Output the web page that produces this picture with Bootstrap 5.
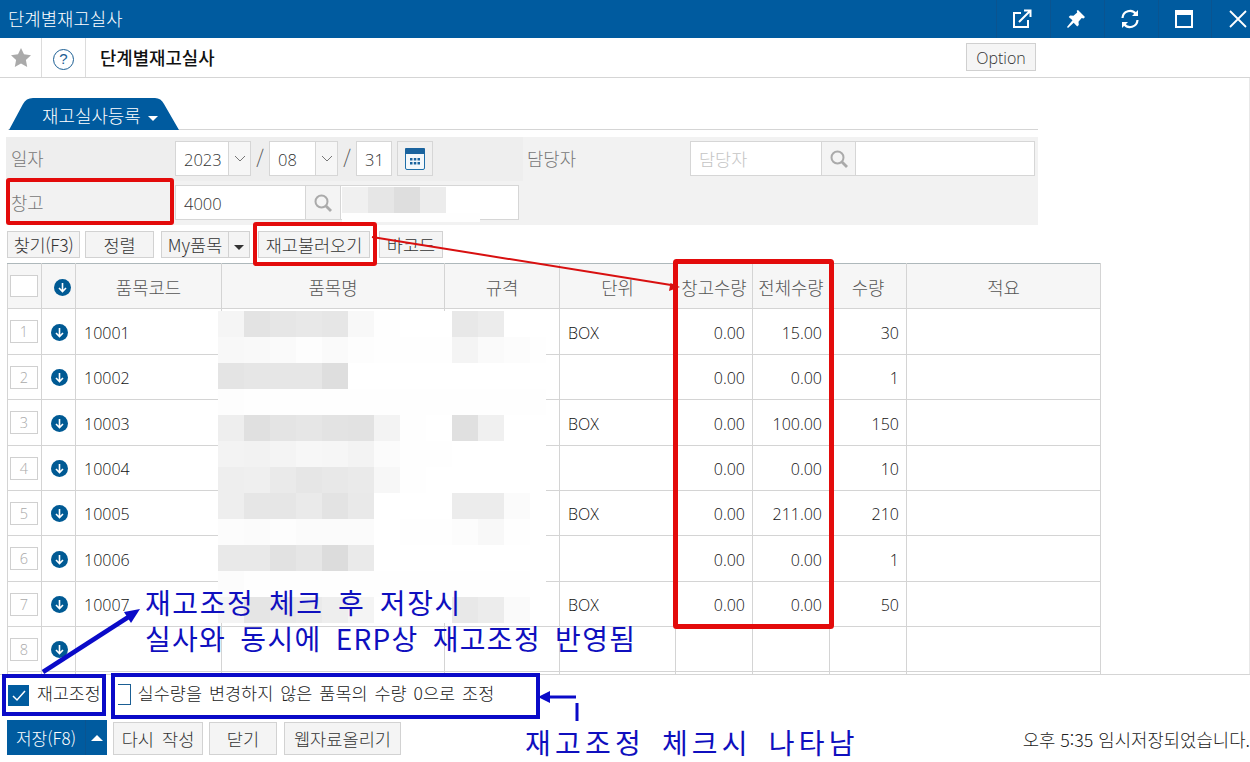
<!DOCTYPE html>
<html lang="ko">
<head>
<meta charset="UTF-8">
<title>단계별재고실사</title>
<link href="https://cdn.jsdelivr.net/npm/bootstrap@5.3.0/dist/css/bootstrap.min.css" rel="stylesheet">
<style>
    html, body { height: 762px; overflow: hidden; }
    body { font-family: "Open Sans", "Noto Sans CJK KR", sans-serif; font-weight: 400; color: #333; font-size: 17.5px; background: #fff; }
    .page-wrap { position: relative; width: 1250px; height: 762px; overflow: hidden; }
    .ko { font-family: "Noto Sans CJK KR", sans-serif; font-weight: 300; }

    .title-bar { height: 38px; background: #005b9f; color: #fff; padding-left: 8px; }
    .title-bar .title-text { font-size: 17.8px; line-height: 36px; }
    .win-btn { width: 54px; height: 38px; border-left: 1px solid #0a5490; padding-right: 3px; }
    .win-btn:nth-child(4) { width: 53px; }
    .win-btn:last-child { width: 39px; padding: 0 0 0 17px; }

    .sub-bar { height: 40px; border-bottom: 1px solid #d5d5d5; }
    .sub-cell { height: 39px; border-right: 1px solid #dcdcdc; }
    .help-mark { width: 21px; height: 21px; margin-top: 3px; border: 1.5px solid #1b5e93; border-radius: 50%; color: #1b5e93; font-size: 15px; line-height: 18px; text-align: center; font-family: "Liberation Sans", sans-serif; }
    .sub-title { font-size: 17.8px; font-weight: 500; color: #111; margin-left: 14px; line-height: 39px; }
    .option-btn { margin-left: auto; margin-right: 214px; width: 70px; height: 28px; margin-top: 5px; background: #f5f5f5; border: 1px solid #d0d0d0; font-size: 16px; color: #333; line-height: 28px; text-align: center; padding: 0; border-radius: 0; font-family: "Open Sans", sans-serif; font-weight: 300; }

    .work-area { height: 596px; padding-top: 20px; overflow: hidden; border-right: 1px solid #e8e8e8; }
    .tab-line { width: 1030px; margin-left: 8px; height: 32px; border-bottom: 1px solid #d5d5d5; }
    .tab-shape { width: 170px; height: 32px; margin-left: 1px; background: #005b9f; color: #fff; font-size: 17.9px; line-height: 34px; padding-left: 33px; clip-path: path('M0 32 L14 6 Q17 0 24 0 L146 0 Q152 0 155 6 L170 32 Z'); }
    .caret-down { display: inline-block; width: 0; height: 0; border-left: 5px solid transparent; border-right: 5px solid transparent; border-top: 5px solid currentColor; vertical-align: middle; margin-left: 7px; }
    .caret-up { display: inline-block; width: 0; height: 0; border-left: 6px solid transparent; border-right: 6px solid transparent; border-bottom: 6px solid #fff; }

    .search-form { width: 1032px; height: 88px; margin: 7px 0 0 6px; background: #f2f2f2; }
    .form-line { height: 44px; padding-top: 4px; }
    .first-part { width: 517px; height: 44px; margin-top: -4px; padding-top: 4px; background: #eeeeee; }
    .field-label { color: #777; font-size: 17.8px; line-height: 35px; padding-left: 5px; }
    .val-box { height: 35px; border: 1px solid #d6d6d6; background: #fff; font-size: 16.500px; color: #333; line-height: 36px; padding-left: 8px; border-radius: 0; font-family: "Open Sans", sans-serif; }
    .form-control.val-box { box-shadow: none; padding-top: 0; padding-bottom: 0; padding-right: 0; font-family: "Noto Sans CJK KR", sans-serif; font-weight: 300; font-size: 17.500px; }
    .form-control.val-box::placeholder { color: #c4c4c4; }
    .chev-box { width: 22px; height: 33px; border-left: 1px solid #d6d6d6; background: #f6f6f6; }
    .slash-mark { width: 18px; text-align: center; color: #555; font-size: 19px; line-height: 32px; }
    .icon-box { width: 33px; height: 35px; border-top: 1px solid #d6d6d6; border-bottom: 1px solid #d6d6d6; background: #f4f4f4; }
    .cal-btn { width: 36px; height: 35px; margin-left: 5px; border: 1px solid #d6d6d6; background: #f0f0f0; }

    .tool-row { height: 27px; margin: 6px 0 5px 7px; }
    .flat-btn { height: 27px; padding: 0; background: #f4f4f4; border: 1px solid #d2d2d2; border-radius: 0; font-size: 17.500px; font-weight: 300; line-height: 25px; color: #333; text-align: center; white-space: nowrap; }
    .flat-btn:hover { background: #f4f4f4; border-color: #d2d2d2; }
    .tight-txt { letter-spacing: -0.4px; }

    .grid-wrap { margin-left: 7px; width: 1093px; }
    .grid-table { table-layout: fixed; width: 1093px; margin: 0; border-collapse: collapse; }
    .grid-table th, .grid-table td { border: 1px solid #d4d4d4; padding: 2px 7px 0 8px; vertical-align: middle; font-size: 16px; font-weight: 300; color: #111; height: 45px; }
    .grid-table tbody tr:nth-child(1) td, .grid-table tbody tr:nth-child(3) td, .grid-table tbody tr:nth-child(6) td { height: 46px; }
    .grid-table thead th { height: 45px; background: #f6f6f6; border-top-color: #aeb8bb; text-align: center; font-weight: 300; font-size: 17.800px; color: #555; padding: 3px 0 0; }
    .grid-table td.col-num { text-align: right; }
    .grid-table td.col-ctr { padding: 0; text-align: center; }
    .grid-table thead th.col-ctr { padding: 0; }
    .no-box { width: 28px; height: 23px; margin-left: 2px; border: 1px solid #d0d0d0; background: #fff; color: #aaa; font-size: 14.500px; line-height: 21px; text-align: center; }
    .no-box.head-box { height: 22px; }
    .down-ico { display: block; margin-left: 9px; margin-top: 1px; }
    th .down-ico { margin-left: 12px; margin-top: 3px; }

    .foot-area { height: 88px; border-top: 1px solid #d5d5d5; }
    .check-row { height: 44px; padding-left: 8px; }
    .blue-check { width: 21px; height: 21px; background: #005b9f; margin-top: 10px; }
    .check-label { font-size: 17.300px; margin-left: 8px; line-height: 36px; color: #222; }
    .empty-check { width: 13px; height: 21px; margin: 9px 0 0 17px; border: 1px solid #1b5e93; border-left: 0; }
    .check-note { font-size: 17.500px; word-spacing: 2px; margin-left: 7px; line-height: 36px; color: #222; white-space: nowrap; }
    .btn-row { height: 35px; margin: 1px 0 0 7px; }
    .save-btn { width: 100px; height: 35px; background: #005b9f; color: #fff; }
    .save-main { width: 78px; font-size: 17px; line-height: 35px; text-align: center; }
    .save-side { width: 22px; border-left: 1px solid #0a5490; }
    .foot-btn { height: 33px; margin-top: 2px; font-size: 17.600px; line-height: 31px; }
    .status-text { margin-left: auto; font-size: 17.800px; color: #222; line-height: 35px; white-space: nowrap; margin-top: 2px; }

    .mark-layer { position: absolute; left: 0; top: 0; width: 1250px; height: 762px; pointer-events: none; }
    .note-text { position: absolute; color: #0f0fbe; font-family: "Noto Sans CJK KR", sans-serif; font-weight: 400; white-space: nowrap; font-size: 28px; line-height: 36px; letter-spacing: 1.600px; word-spacing: 5px; }
    .note-a { left: 145px; top: 584px; }
    .note-b { left: 145px; top: 620px; letter-spacing: 1.300px; }
    .note-c { left: 525px; top: 724px; letter-spacing: 4.200px; }
</style>
</head>
<body>
<div class="page-wrap">
    <div class="title-bar d-flex justify-content-between ko">
        <div class="title-text">단계별재고실사</div>
        <div class="d-flex">
            <div class="win-btn d-flex align-items-center justify-content-center">
                <svg width="20" height="20" viewBox="0 0 20 20" fill="none" stroke="#fff" stroke-width="2"><path d="M9 4H2v14h14v-7"/><path d="M7 13L18 2M12 1.500h6.500v6.500"/></svg>
            </div>
            <div class="win-btn d-flex align-items-center justify-content-center">
                <svg width="20" height="20" viewBox="0 0 20 20" fill="#fff"><path d="M12 1l7 7-1.500 1.500-1.800-.5-3.200 3.700.3 3.300-1.600 1.500-3.500-3.800L2 19l-1-1 5.500-6.700L2.700 8l1.500-1.600 3.300.3 3.700-3.200-.5-1.800z"/></svg>
            </div>
            <div class="win-btn d-flex align-items-center justify-content-center">
                <svg width="20" height="20" viewBox="0 0 20 20" fill="none" stroke="#fff" stroke-width="2.200"><path d="M2.500 9A7.500 7.500 0 0 1 16 5"/><path d="M17.500 11A7.500 7.500 0 0 1 4 15"/><path d="M18 1v6h-6z" fill="#fff" stroke="none"/><path d="M2 19v-6h6z" fill="#fff" stroke="none"/></svg>
            </div>
            <div class="win-btn d-flex align-items-center justify-content-center">
                <svg width="18" height="18" viewBox="0 0 18 18" fill="none" stroke="#fff" stroke-width="2"><rect x="1" y="1" width="16" height="16"/><rect x="1" y="1" width="16" height="3" fill="#fff"/></svg>
            </div>
            <div class="win-btn d-flex align-items-center justify-content-start">
                <svg width="18" height="18" viewBox="0 0 18 18" stroke="#fff" stroke-width="1.800"><path d="M1 1l16 16M17 1L1 17"/></svg>
            </div>
        </div>
    </div>

    <div class="sub-bar d-flex ko">
        <div class="sub-cell d-flex align-items-center justify-content-center" style="width:42px">
            <svg width="20" height="19" viewBox="0 0 20 19" fill="#aaa"><path d="M10 0l3 6.300 7 .9-5.100 4.800 1.300 6.900L10 15.600l-6.200 3.300 1.300-6.900L0 7.200l7-.9z"/></svg>
        </div>
        <div class="sub-cell d-flex align-items-center justify-content-center" style="width:44px">
            <div class="help-mark">?</div>
        </div>
        <div class="sub-title">단계별재고실사</div>
        <button type="button" class="option-btn">Option</button>
    </div>

    <div class="work-area">
        <div class="tab-line ko">
            <div class="tab-shape">재고실사등록<span class="caret-down"></span></div>
        </div>

        <form class="search-form ko">
            <div class="form-line d-flex">
                <div class="first-part d-flex">
                    <div class="field-label" style="width:169px">일자</div>
                    <div class="val-box d-flex justify-content-between pe-0" style="width:76px">2023
                        <div class="chev-box d-flex align-items-center justify-content-center"><svg width="12" height="7" viewBox="0 0 12 7" fill="none" stroke="#777"><path d="M1 1l5 5 5-5"/></svg></div>
                    </div>
                    <div class="slash-mark">/</div>
                    <div class="val-box d-flex justify-content-between pe-0" style="width:69px">08
                        <div class="chev-box d-flex align-items-center justify-content-center"><svg width="12" height="7" viewBox="0 0 12 7" fill="none" stroke="#777"><path d="M1 1l5 5 5-5"/></svg></div>
                    </div>
                    <div class="slash-mark">/</div>
                    <div class="val-box" style="width:36px">31</div>
                    <div class="cal-btn d-flex align-items-center justify-content-center">
                        <svg width="20" height="22" viewBox="0 0 20 22"><rect x="0.500" y="0.500" width="19" height="21" rx="1.500" fill="#f4f8fb" stroke="#1e6ea8"/><rect x="0" y="0" width="20" height="6" rx="1" fill="#1a639e"/><path d="M5 10h2.500v2.500H5zM8.800 10h2.500v2.500H8.800zM12.500 10H15v2.500h-2.500zM5 14h2.500v2.500H5zM8.800 14h2.500v2.500H8.800zM12.500 14H15v2.500h-2.500z" fill="#1a639e"/></svg>
                    </div>
                </div>
                <div class="field-label ps-1" style="width:167px">담당자</div>
                <input type="text" class="form-control val-box" placeholder="담당자" style="width:132px">
                <div class="icon-box d-flex align-items-center justify-content-center">
                    <svg width="18" height="18" viewBox="0 0 18 18" fill="none" stroke="#aaa" stroke-width="2"><circle cx="7.500" cy="7.500" r="6"/><path d="M12 12l5 5" stroke-width="2.800"/></svg>
                </div>
                <div class="val-box" style="width:180px"></div>
            </div>
            <div class="form-line d-flex">
                <div class="field-label" style="width:169px">창고</div>
                <div class="val-box" style="width:131px;line-height:35px">4000</div>
                <div class="icon-box d-flex align-items-center justify-content-center" style="width:34px">
                    <svg width="18" height="18" viewBox="0 0 18 18" fill="none" stroke="#aaa" stroke-width="2"><circle cx="7.500" cy="7.500" r="6"/><path d="M12 12l5 5" stroke-width="2.800"/></svg>
                </div>
                <div class="val-box" style="width:179px"></div>
            </div>
        </form>

        <div class="tool-row d-flex ko">
            <button type="button" class="flat-btn tight-txt" style="width:73px">찾기(F3)</button>
            <button type="button" class="flat-btn" style="width:69px;margin-left:5px">정렬</button>
            <div class="d-flex" style="margin-left:7px">
                <button type="button" class="flat-btn" style="width:68px">My품목</button>
                <button type="button" class="flat-btn" style="width:21px;border-left:0"><span class="caret-down m-0"></span></button>
            </div>
            <button type="button" class="flat-btn" style="width:112px;margin-left:8px">재고불러오기</button>
            <button type="button" class="flat-btn" style="width:64px;margin-left:9px">바코드</button>
        </div>

        <div class="grid-wrap">
            <table class="grid-table">
                <colgroup>
                    <col style="width:34px"><col style="width:34px"><col style="width:146px"><col style="width:223px"><col style="width:115px">
                    <col style="width:116px"><col style="width:77px"><col style="width:77px"><col style="width:77px"><col style="width:194px">
                </colgroup>
                <thead class="ko">
                    <tr>
                        <th class="col-ctr"><div class="no-box head-box"></div></th>
                        <th class="col-ctr"><svg class="down-ico" width="17" height="17" viewBox="0 0 17 17"><circle cx="8.500" cy="8.500" r="8.500" fill="#005a94"/><path d="M8.500 4v8.500M5 9l3.500 3.500L12 9" fill="none" stroke="#fff" stroke-width="1.600"/></svg></th>
                        <th>품목코드</th>
                        <th>품목명</th>
                        <th>규격</th>
                        <th>단위</th>
                        <th>창고수량</th>
                        <th>전체수량</th>
                        <th>수량</th>
                        <th>적요</th>
                    </tr>
                </thead>
                <tbody id="gridBody"></tbody>
            </table>
        </div>
    </div>

    <div class="foot-area">
        <div class="check-row d-flex ko">
            <div class="blue-check d-flex align-items-center justify-content-center">
                <svg width="14" height="12" viewBox="0 0 14 12" fill="none" stroke="#fff" stroke-width="1.500"><path d="M1 6l4 4 8-9"/></svg>
            </div>
            <div class="check-label">재고조정</div>
            <div class="empty-check"></div>
            <div class="check-note">실수량을 변경하지 않은 품목의 수량 0으로 조정</div>
        </div>
        <div class="btn-row d-flex ko">
            <div class="save-btn d-flex">
                <div class="save-main">저장(F8)</div>
                <div class="save-side d-flex align-items-center justify-content-center"><span class="caret-up"></span></div>
            </div>
            <button type="button" class="flat-btn foot-btn" style="width:90px;margin-left:6px;word-spacing:3px">다시 작성</button>
            <button type="button" class="flat-btn foot-btn" style="width:68px;margin-left:6px">닫기</button>
            <button type="button" class="flat-btn foot-btn" style="width:117px;margin-left:7px">웹자료올리기</button>
            <div class="status-text">오후 5:35 임시저장되었습니다.</div>
        </div>
    </div>

    <!-- 모자이크 + 빨강/파랑 표시 -->
    <svg class="mark-layer" id="markLayer" viewBox="0 0 1250 762">
        <g id="blurCells"></g>
        <g fill="none" stroke="#e30b0b" stroke-width="4">
            <rect x="8" y="180" width="164" height="43" rx="1"/>
            <rect x="255" y="224" width="120" height="40" rx="1"/>
        </g>
        <rect x="675.500" y="261.500" width="156" height="365" rx="1" fill="none" stroke="#e30b0b" stroke-width="5"/>
        <path d="M372 237L671 285" stroke="#d81010" stroke-width="2" fill="none"/>
        <path d="M680 287l-11 4 1.500-8z" fill="#d81010"/>
        <g fill="none" stroke="#0a0ac8" stroke-width="4">
            <rect x="4" y="676" width="100" height="38"/>
            <rect x="113" y="675" width="425" height="42"/>
        </g>
        <path d="M43 672L130 616" stroke="#0a0ac8" stroke-width="4.500" fill="none"/>
        <path d="M140 609l-16 3 7 11z" fill="#0a0ac8"/>
        <path d="M548 697h28" stroke="#0a0ac8" stroke-width="3" fill="none"/>
        <path d="M538 697l12-6v12z" fill="#0a0ac8"/>
        <path d="M577 703v18" stroke="#0a0ac8" stroke-width="3" fill="none"/>
    </svg>
    <div class="note-text note-a">재고조정 체크 후 저장시</div>
    <div class="note-text note-b">실사와 동시에 ERP상 재고조정 반영됨</div>
    <div class="note-text note-c">재고조정 체크시 나타남</div>
</div>

<script src="https://cdn.jsdelivr.net/npm/bootstrap@5.3.0/dist/js/bootstrap.bundle.min.js"></script>
<script>
    const filas = [
        {cod: '10001', uni: 'BOX', alm: '0.00', tot: '15.00', cant: '30'},
        {cod: '10002', uni: '', alm: '0.00', tot: '0.00', cant: '1'},
        {cod: '10003', uni: 'BOX', alm: '0.00', tot: '100.00', cant: '150'},
        {cod: '10004', uni: '', alm: '0.00', tot: '0.00', cant: '10'},
        {cod: '10005', uni: 'BOX', alm: '0.00', tot: '211.00', cant: '210'},
        {cod: '10006', uni: '', alm: '0.00', tot: '0.00', cant: '1'},
        {cod: '10007', uni: 'BOX', alm: '0.00', tot: '0.00', cant: '50'},
        {cod: '', uni: '', alm: '', tot: '', cant: ''},
        {cod: '', uni: '', alm: '', tot: '', cant: ''}
    ];
    const icono = '<svg class="down-ico" width="17" height="17" viewBox="0 0 17 17"><circle cx="8.500" cy="8.500" r="8.500" fill="#005a94"/><path d="M8.500 4v8.500M5 9l3.500 3.500L12 9" fill="none" stroke="#fff" stroke-width="1.600"/></svg>';
    const tbody = document.getElementById('gridBody');
    filas.forEach((f, i) => {
        // la fila 9 queda cortada por el pie, sin numero visible
        tbody.innerHTML += `
            <tr>
                <td class="col-ctr"><div class="no-box">${i < 8 ? i + 1 : ''}</div></td>
                <td class="col-ctr">${icono}</td>
                <td>${f.cod}</td>
                <td></td>
                <td></td>
                <td>${f.uni}</td>
                <td class="col-num">${f.alm}</td>
                <td class="col-num">${f.tot}</td>
                <td class="col-num">${f.cant}</td>
                <td></td>
            </tr>`;
    });

    // mosaico: 26px por bloque, valores de gris por fila
    const gris = [
        [245,227,230,232,230,248,254,255,255,232,236,255,255],
        [248,249,250,253,250,253,254,254,254,244,250,252,254],
        [228,230,230,230,222,255,255,255,255,255,255,255,255],
        [253,254,254,254,254,254,254,254,254,254,254,254,254],
        [238,224,228,230,227,226,243,254,255,224,240,255,255],
        [243,242,244,247,246,243,251,254,254,255,255,255,255],
        [238,239,234,230,232,234,247,254,255,255,255,255,255],
        [238,230,230,234,227,233,255,255,255,236,236,251,255],
        [252,251,253,251,251,251,255,254,254,252,248,254,255],
        [233,233,226,230,220,234,255,255,255,255,255,255,255],
        [252,254,254,254,254,254,254,254,254,254,254,254,255],
        [244,229,232,234,238,244,255,255,255,232,236,250,255]
    ];
    const capa = document.getElementById('blurCells');
    const bloque = (x, y, w, h, v) => {
        const r = document.createElementNS('http://www.w3.org/2000/svg', 'rect');
        r.setAttribute('x', x); r.setAttribute('y', y);
        r.setAttribute('width', w); r.setAttribute('height', h);
        r.setAttribute('fill', `rgb(${v},${v},${v})`);
        capa.appendChild(r);
    };
    gris.forEach((fila, r) => fila.forEach((v, c) => {
        bloque(218 + c * 26, 311 + r * 26, c === 12 ? 16 : 26, 26, v);
    }));
    [240, 230, 222, 236].forEach((v, c) => bloque(342 + c * 26, 187, 26, 26, v));
    bloque(342, 213, 138, 9, 254);
</script>
</body>
</html>
